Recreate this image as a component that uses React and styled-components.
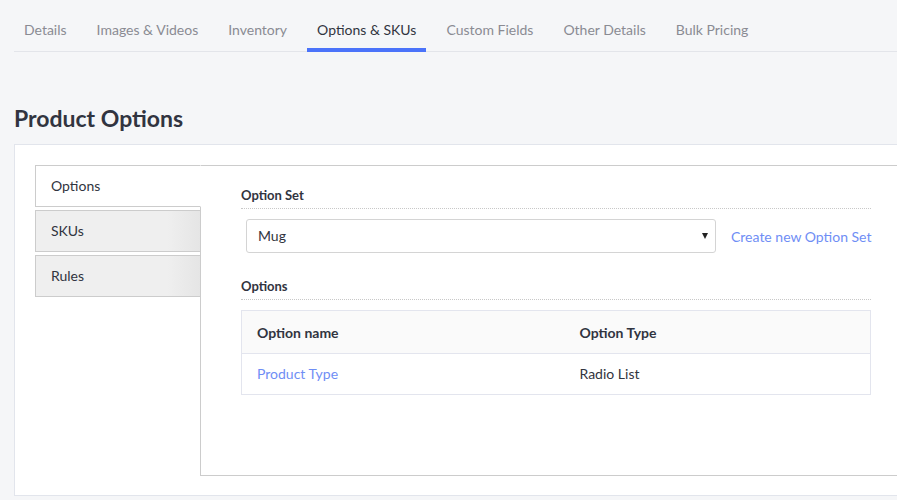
import React from 'react';
import styled, { createGlobalStyle } from 'styled-components';

const GlobalStyle = createGlobalStyle`
  html, body {
    margin: 0;
    padding: 0;
    background: #f5f6f8;
    overflow: hidden;
  }
  body {
    font-family: "Source Sans Pro", Lato, "Liberation Sans", sans-serif;
    color: #313440;
  }
  * {
    box-sizing: border-box;
  }
`;

const Page = styled.div`
  padding-left: 14px;
  width: 897px;
  height: 500px;
  overflow: hidden;
`;

const TabBar = styled.nav`
  display: flex;
  gap: 10px;
  height: 52px;
  border-bottom: 1px solid #e3e5ea;
`;

const Tab = styled.a`
  display: block;
  padding: 20px 10px 9px;
  font-size: 14px;
  line-height: 19px;
  height: 52px;
  color: ${({ $active }) => ($active ? '#313440' : '#8a8b93')};
  border-bottom: 4px solid ${({ $active }) => ($active ? '#4b73fa' : 'transparent')};
  white-space: nowrap;
  cursor: pointer;
`;

const Heading = styled.h1`
  margin: 51px 0 11px;
  font-size: 23px;
  line-height: 30px;
  font-weight: 700;
  color: #313440;
`;

const Panel = styled.section`
  background: #fff;
  border: 1px solid #e2e5ec;
  margin-right: -40px;
  padding: 20px 0 19px 20px;
  display: flex;
  align-items: flex-start;
`;

const SideTabs = styled.div`
  width: 166px;
  flex-shrink: 0;
  display: flex;
  flex-direction: column;
  gap: 3px;
`;

const SideTab = styled.div`
  position: relative;
  z-index: ${({ $active }) => ($active ? 1 : 0)};
  height: 42px;
  padding: 0 15px 1px;
  display: flex;
  align-items: center;
  font-size: 14px;
  color: #313440;
  border: 1px solid #cccccc;
  border-right-color: ${({ $active }) => ($active ? '#fff' : '#cccccc')};
  background: ${({ $active }) =>
    $active ? '#fff' : 'linear-gradient(to right, #efefef 80%, #e5e5e5)'};
  cursor: pointer;
`;

const ContentBox = styled.div`
  flex: 1;
  margin-left: -1px;
  height: 311px;
  border: 1px solid #cccccc;
  padding: 20px 0 0 40px;
`;

const Form = styled.div`
  width: 630px;
`;

const SectionLabel = styled.div`
  font-size: 13px;
  font-weight: 700;
  line-height: 18px;
  padding-bottom: 4px;
  border-bottom: 1px dotted #c8c8c8;
`;

const SelectRow = styled.div`
  display: flex;
  align-items: center;
  gap: 15px;
  margin: 10px 0 24px 5px;
`;

const SelectBox = styled.div`
  width: 470px;
  flex-shrink: 0;
  height: 34px;
  border: 1px solid #d4d4d4;
  border-radius: 3px;
  display: flex;
  align-items: center;
  justify-content: space-between;
  padding: 0 6px 1px 11px;
  font-size: 14px;
  color: #313440;
  background: #fff;
`;

const Arrow = styled.span`
  width: 0;
  height: 0;
  border-left: 3.5px solid transparent;
  border-right: 3.5px solid transparent;
  border-top: 6px solid #222;
  margin-right: 1px;
`;

const Link = styled.a`
  color: #6f8ef5;
  font-size: 14px;
  white-space: nowrap;
  cursor: pointer;
`;

const Table = styled.table`
  width: 630px;
  margin-top: 10px;
  border-collapse: collapse;
  border: 1px solid #e3e5ee;
  font-size: 14px;
`;

const Th = styled.th`
  text-align: left;
  font-weight: 700;
  font-size: 14px;
  height: 43px;
  padding: 0 15px;
  background: #fafafa;
  border-bottom: 1px solid #e3e5ee;
  width: ${({ $w }) => $w || 'auto'};
`;

const Td = styled.td`
  height: 41px;
  padding: 0 15px 1px;
  color: ${({ $link }) => ($link ? '#6f8ef5' : '#313440')};
`;

const tabs = [
  'Details',
  'Images & Videos',
  'Inventory',
  'Options & SKUs',
  'Custom Fields',
  'Other Details',
  'Bulk Pricing',
];

const App = () => (
  <Page>
    <GlobalStyle />
    <TabBar>
      {tabs.map((t) => (
        <Tab key={t} $active={t === 'Options & SKUs'}>
          {t}
        </Tab>
      ))}
    </TabBar>
    <Heading>Product Options</Heading>
    <Panel>
      <SideTabs>
        <SideTab $active>Options</SideTab>
        <SideTab>SKUs</SideTab>
        <SideTab>Rules</SideTab>
      </SideTabs>
      <ContentBox>
        <Form>
          <SectionLabel>Option Set</SectionLabel>
          <SelectRow>
            <SelectBox>
              Mug
              <Arrow />
            </SelectBox>
            <Link>Create new Option Set</Link>
          </SelectRow>
          <SectionLabel>Options</SectionLabel>
          <Table>
            <thead>
              <tr>
                <Th $w="323px">Option name</Th>
                <Th>Option Type</Th>
              </tr>
            </thead>
            <tbody>
              <tr>
                <Td $link>Product Type</Td>
                <Td>Radio List</Td>
              </tr>
            </tbody>
          </Table>
        </Form>
      </ContentBox>
    </Panel>
  </Page>
);

export default App;
